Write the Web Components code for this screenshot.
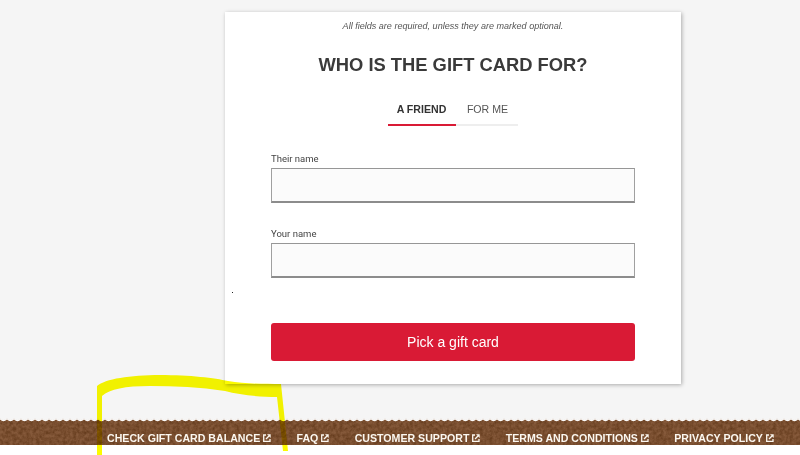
<!DOCTYPE html>
<html>
<head>
<meta charset="utf-8">
<title>Gift card</title>
<style>
    html, body {
        margin: 0;
        height: 455px;
        overflow: hidden;
        background: #fff;
        font-family: "Liberation Sans", Arial, sans-serif;
    }
</style>
</head>
<body>
<gift-page>
    <gift-form></gift-form>
    <gift-footer slot="footer">
        <footer-link>CHECK GIFT CARD BALANCE</footer-link>
        <footer-link>FAQ</footer-link>
        <footer-link>CUSTOMER SUPPORT</footer-link>
        <footer-link>TERMS AND CONDITIONS</footer-link>
        <footer-link>PRIVACY POLICY</footer-link>
    </gift-footer>
</gift-page>

<template id="page-tpl">
<style>
    :host {
        display: flex;
        flex-direction: column;
        height: 455px;
        position: relative;
        background: #fff;
    }
    .main {
        height: 418px;
        box-sizing: border-box;
        padding: 12px 0 0 225px;
        background: #f5f5f5;
    }
    .marker {
        position: absolute;
        left: 0;
        top: 0;
        width: 800px;
        height: 455px;
        pointer-events: none;
        mix-blend-mode: multiply;
    }
</style>
<div class="main"><slot></slot></div>
<slot name="footer"></slot>
<svg class="marker" viewBox="0 0 800 455" fill="#fbfb00">
    <path d="M97 455V386C105 379 130 375 160 375C190 375 215 378 228 381C245 384 265 384 281 384L288 451H283L277 397C260 397 240 395 225 391C200 387 175 386 150 386C125 386 110 389 102 396V455Z"/>
</svg>
</template>

<template id="form-tpl">
<style>
    :host {
        display: block;
        width: 456px;
        height: 372px;
        box-sizing: border-box;
        padding: 0 46px;
        background: #fff;
        box-shadow: 1px 1px 4px rgba(0,0,0,.3);
        color: #333;
        position: relative;
    }
    .note {
        margin: 0;
        padding-top: 8px;
        text-align: center;
        font-size: 9.05px;
        line-height: 13px;
        font-style: italic;
        color: #555;
    }
    h2 {
        margin: 21px 0 0;
        text-align: center;
        font-size: 18.35px;
        line-height: 22px;
        font-weight: bold;
        color: #3a3a3a;
    }
    .tabs {
        display: flex;
        justify-content: center;
        margin: 18px 1px 0 0;
    }
    .tab {
        box-sizing: border-box;
        height: 32px;
        padding: 9px 0 0 2px;
        font-size: 10.6px;
        line-height: 13px;
        text-align: center;
        border-bottom: 2px solid #eee;
        color: #555;
        width: 62px;
    }
    .tab.on {
        width: 68px;
        padding-left: 0;
        font-weight: bold;
        color: #333;
        border-bottom-color: #d91a35;
    }
    .dot {
        position: absolute;
        left: 7px;
        top: 280px;
        width: 1px;
        height: 1px;
        background: #222;
    }
    .go {
        display: block;
        width: 100%;
        height: 38px;
        margin-top: 45px;
        border: 0;
        border-radius: 3px;
        background: #d91a35;
        color: #fff;
        font: 14px "Liberation Sans", Arial, sans-serif;
    }
</style>
<p class="note">All fields are required, unless they are marked optional.</p>
<h2>WHO IS THE GIFT CARD FOR?</h2>
<div class="tabs">
    <div class="tab on">A FRIEND</div>
    <div class="tab">FOR ME</div>
</div>
<form-field style="margin-top:27px">Their name</form-field>
<form-field style="margin-top:25px">Your name</form-field>
<div class="dot"></div>
<button class="go">Pick a gift card</button>
</template>

<template id="field-tpl">
<style>
    :host {
        display: block;
    }
    label {
        display: block;
        font: 9.5px/12px Roboto, "Liberation Sans", sans-serif;
        color: #444;
        margin-bottom: 3px;
    }
    .box {
        box-sizing: border-box;
        height: 35px;
        background: #fbfbfb;
        border: 1px solid #a0a0a0;
        border-top-color: #969696;
        border-bottom: 2px solid #8c8c8c;
    }
</style>
<label><slot></slot></label>
<div class="box"></div>
</template>

<template id="footer-tpl">
<style>
    :host {
        display: block;
        position: relative;
        height: 27px;
        background: #85593a;
        overflow: hidden;
    }
    .grain {
        position: absolute;
        left: 0;
        top: 0;
        width: 100%;
        height: 100%;
    }
    .edge {
        position: absolute;
        left: 0;
        top: 0;
        width: 100%;
        height: 4px;
    }
    nav {
        position: relative;
        display: flex;
        height: 100%;
        align-items: center;
        box-sizing: border-box;
        padding: 12px 0 0 107px;
        gap: 25.3px;
    }
</style>
<svg class="grain" width="800" height="27">
    <filter id="g" x="0" y="0" width="100%" height="100%" color-interpolation-filters="sRGB">
        <feTurbulence type="fractalNoise" baseFrequency=".3" numOctaves="3" seed="4"/>
        <feColorMatrix values="0 0 0 0 .36  0 0 0 0 .2  0 0 0 0 .08  1.3 0 0 0 -.35"/>
    </filter>
    <rect width="800" height="27" filter="url(#g)"/>
</svg>
<svg class="edge" width="800" height="4">
    <defs>
        <pattern id="sc" width="7" height="4" patternUnits="userSpaceOnUse">
            <path d="M0 0H7V.4Q5.2 2.2 3.5 2.2Q1.8 2.2 0 .4Z" fill="#f5f5f5"/>
            <path d="M0 .6Q1.8 2.6 3.5 2.6Q5.2 2.6 7 .6" fill="none" stroke="#fff" stroke-width="1.2"/>
        </pattern>
    </defs>
    <rect width="800" height="4" fill="url(#sc)"/>
</svg>
<nav><slot></slot></nav>
</template>

<template id="link-tpl">
<style>
    :host {
        display: inline-flex;
        align-items: center;
        gap: 3px;
        font: bold 10.62px/12px "Liberation Sans", Arial, sans-serif;
        color: #fbf7f0;
        white-space: nowrap;
    }
    svg {
        width: 8px;
        height: 8px;
    }
</style>
<slot></slot>
<svg viewBox="0 0 8 8" fill="none" stroke="#fbf7f0" stroke-width="1.3">
    <path d="M3 1H.7V7.3H7V5"/>
    <path d="M3 5L6 2"/>
    <path d="M4 .3H7.7V4Z" fill="#fbf7f0" stroke="none"/>
</svg>
</template>

<script>
    function shadow(el, id) {
        const root = el.attachShadow({ mode: 'open' });
        root.appendChild(document.getElementById(id).content.cloneNode(true));
    }

    class GiftPage extends HTMLElement {
        constructor() { super(); shadow(this, 'page-tpl'); }
    }
    class GiftForm extends HTMLElement {
        constructor() { super(); shadow(this, 'form-tpl'); }
    }
    class FormField extends HTMLElement {
        constructor() { super(); shadow(this, 'field-tpl'); }
    }
    class GiftFooter extends HTMLElement {
        constructor() { super(); shadow(this, 'footer-tpl'); }
    }
    class FooterLink extends HTMLElement {
        constructor() { super(); shadow(this, 'link-tpl'); }
    }

    customElements.define('form-field', FormField);
    customElements.define('gift-form', GiftForm);
    customElements.define('footer-link', FooterLink);
    customElements.define('gift-footer', GiftFooter);
    customElements.define('gift-page', GiftPage);
</script>
</body>
</html>
